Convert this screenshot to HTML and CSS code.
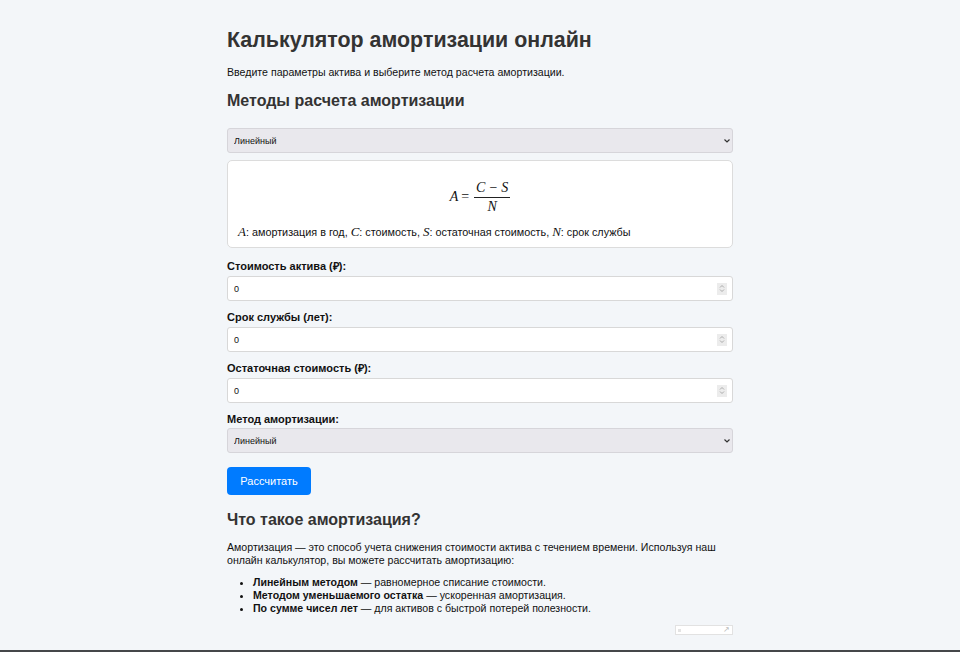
FILE: index.html
```html
<!DOCTYPE html>
<html lang="ru">
<head>
<meta charset="utf-8">
<title>Калькулятор амортизации онлайн</title>
<link rel="stylesheet" href="styles.css">
</head>
<body>
<main class="page">
  <h1 class="title">Калькулятор амортизации онлайн</h1>
  <p class="intro">Введите параметры актива и выберите метод расчета амортизации.</p>
  <h2 class="subtitle">Методы расчета амортизации</h2>

  <div class="select-wrap">
    <select class="select"><option>Линейный</option></select>
    <svg class="chev" width="8" height="6" viewBox="0 0 8 6"><path d="M1.5 1.5 L4 4 L6.5 1.5" fill="none" stroke="#333" stroke-width="1.2"/></svg>
  </div>

  <div class="formula-box">
    <div class="formula">
      <span class="mi">A</span><span class="eq">=</span>
      <span class="frac"><span class="num"><span class="mi">C</span><span class="minus">−</span><span class="mi">S</span></span><span class="den"><span class="mi">N</span></span></span>
    </div>
    <p class="legend"><span class="mi">A</span>: амортизация в год, <span class="mi">C</span>: стоимость, <span class="mi">S</span>: остаточная стоимость, <span class="mi">N</span>: срок службы</p>
  </div>

  <form class="form">
    <label class="label first">Стоимость актива (₽):</label>
    <div class="input"><span class="val">0</span><span class="spin"><svg width="6" height="9" viewBox="0 0 6 9"><path d="M1 3.5 L3 1.5 L5 3.5 M1 5.5 L3 7.5 L5 5.5" fill="none" stroke="#999" stroke-width="0.8"/></svg></span></div>
    <label class="label">Срок службы (лет):</label>
    <div class="input"><span class="val">0</span><span class="spin"><svg width="6" height="9" viewBox="0 0 6 9"><path d="M1 3.5 L3 1.5 L5 3.5 M1 5.5 L3 7.5 L5 5.5" fill="none" stroke="#999" stroke-width="0.8"/></svg></span></div>
    <label class="label">Остаточная стоимость (₽):</label>
    <div class="input"><span class="val">0</span><span class="spin"><svg width="6" height="9" viewBox="0 0 6 9"><path d="M1 3.5 L3 1.5 L5 3.5 M1 5.5 L3 7.5 L5 5.5" fill="none" stroke="#999" stroke-width="0.8"/></svg></span></div>
    <label class="label">Метод амортизации:</label>
    <div class="select-wrap tight">
      <select class="select"><option>Линейный</option></select>
      <svg class="chev" width="8" height="6" viewBox="0 0 8 6"><path d="M1.5 1.5 L4 4 L6.5 1.5" fill="none" stroke="#333" stroke-width="1.2"/></svg>
    </div>
    <button type="button" class="btn">Рассчитать</button>
  </form>

  <h2 class="subtitle second">Что такое амортизация?</h2>
  <p class="text">Амортизация — это способ учета снижения стоимости актива с течением времени. Используя наш онлайн калькулятор, вы можете рассчитать амортизацию:</p>
  <ul class="list">
    <li><b>Линейным методом</b> — равномерное списание стоимости.</li>
    <li><b>Методом уменьшаемого остатка</b> — ускоренная амортизация.</li>
    <li><b>По сумме чисел лет</b> — для активов с быстрой потерей полезности.</li>
  </ul>
  <div class="widget-row">
    <div class="widget"><span class="dot"></span><span class="arrow">↗</span></div>
  </div>
</main>
<div class="bottom-bar"></div>
</body>
</html>
```
FILE: styles.css
```css
html, body {
  margin: 0;
  padding: 0;
  height: 100%;
}
body {
  background: #f3f6f9;
  font-family: "Liberation Sans", Arial, sans-serif;
  color: #111;
  display: flex;
  flex-direction: column;
  min-height: 652px;
}
.page {
  width: 506px;
  margin: 0 auto;
  flex: 1;
}
.title {
  font-size: 21.4px;
  line-height: 28px;
  font-weight: bold;
  color: #333;
  margin: 26px 0 11px;
}
.intro {
  font-size: 10.6px;
  line-height: 14px;
  margin: 0 0 11px;
}
.subtitle {
  font-size: 16px;
  line-height: 22px;
  color: #333;
  font-weight: bold;
  margin: 0 0 16px;
}
.select-wrap {
  position: relative;
  height: 25px;
}
.select {
  -webkit-appearance: none;
  appearance: none;
  width: 100%;
  height: 25px;
  box-sizing: border-box;
  border: 1px solid #d6d5da;
  border-radius: 3px;
  background: #e9e8ed;
  font-family: "Liberation Sans", Arial, sans-serif;
  font-size: 9px;
  color: #111;
  padding: 0 6px;
  margin: 0;
  display: block;
}
.chev {
  position: absolute;
  right: 2px;
  top: 10px;
}
.formula-box {
  margin-top: 7px;
  background: #fff;
  border: 1px solid #dcdcdc;
  border-radius: 5px;
  height: 88px;
  box-sizing: border-box;
  padding: 17px 10px 0;
}
.formula {
  display: flex;
  justify-content: center;
  align-items: center;
  font-family: "Liberation Serif", "Times New Roman", serif;
  font-size: 14px;
  height: 38px;
}
.mi {
  font-family: "Liberation Serif", "Times New Roman", serif;
  font-style: italic;
  font-size: 14px;
}
.eq {
  margin: 0 4px 0 3px;
  font-size: 14px;
}
.frac {
  display: inline-flex;
  flex-direction: column;
  align-items: center;
  margin-left: 1px;
}
.num {
  padding: 0 2px 2px;
  border-bottom: 1px solid #222;
  line-height: 15px;
}
.minus {
  margin: 0 4px;
}
.den {
  line-height: 16px;
  padding-top: 1px;
}
.legend {
  margin: 9px 0 0;
  font-size: 10.8px;
  line-height: 14px;
}
.legend .mi {
  font-size: 13px;
}
.form {
  display: flex;
  flex-direction: column;
  margin: 0;
}
.label {
  font-size: 11px;
  line-height: 14px;
  font-weight: bold;
  margin: 9px 0 3px;
}
.label.first {
  margin-top: 11px;
}
.input {
  height: 25px;
  box-sizing: border-box;
  background: #fff;
  border: 1px solid #d8d8d8;
  border-radius: 3px;
  display: flex;
  align-items: center;
  justify-content: space-between;
  padding: 0 5px 0 6px;
  font-size: 9px;
}
.spin {
  width: 10px;
  height: 12px;
  background: #ececec;
  display: flex;
  align-items: center;
  justify-content: center;
}
.tight {
  margin-top: -1px;
}
.btn {
  align-self: flex-start;
  margin-top: 14px;
  width: 84px;
  height: 28px;
  background: #007bff;
  color: #fff;
  border: none;
  border-radius: 4px;
  font-family: "Liberation Sans", Arial, sans-serif;
  font-size: 11px;
  padding: 0;
}
.second {
  margin: 14px 0 10px;
}
.text {
  font-size: 10.6px;
  line-height: 13px;
  margin: 0 0 9px;
}
.list {
  margin: 0;
  padding-left: 26px;
  font-size: 10.6px;
  line-height: 13px;
}
.widget-row {
  display: flex;
  justify-content: flex-end;
  margin-top: 10px;
}
.widget {
  width: 58px;
  height: 10px;
  background: #fff;
  border: 1px solid #e2e2e2;
  display: flex;
  align-items: center;
  justify-content: space-between;
  padding: 0 2px;
  box-sizing: border-box;
}
.dot {
  width: 3px;
  height: 3px;
  background: #e4e4e4;
}
.arrow {
  font-size: 8px;
  line-height: 8px;
  color: #bbb;
}
.bottom-bar {
  height: 2px;
  background: #45474a;
}
```
